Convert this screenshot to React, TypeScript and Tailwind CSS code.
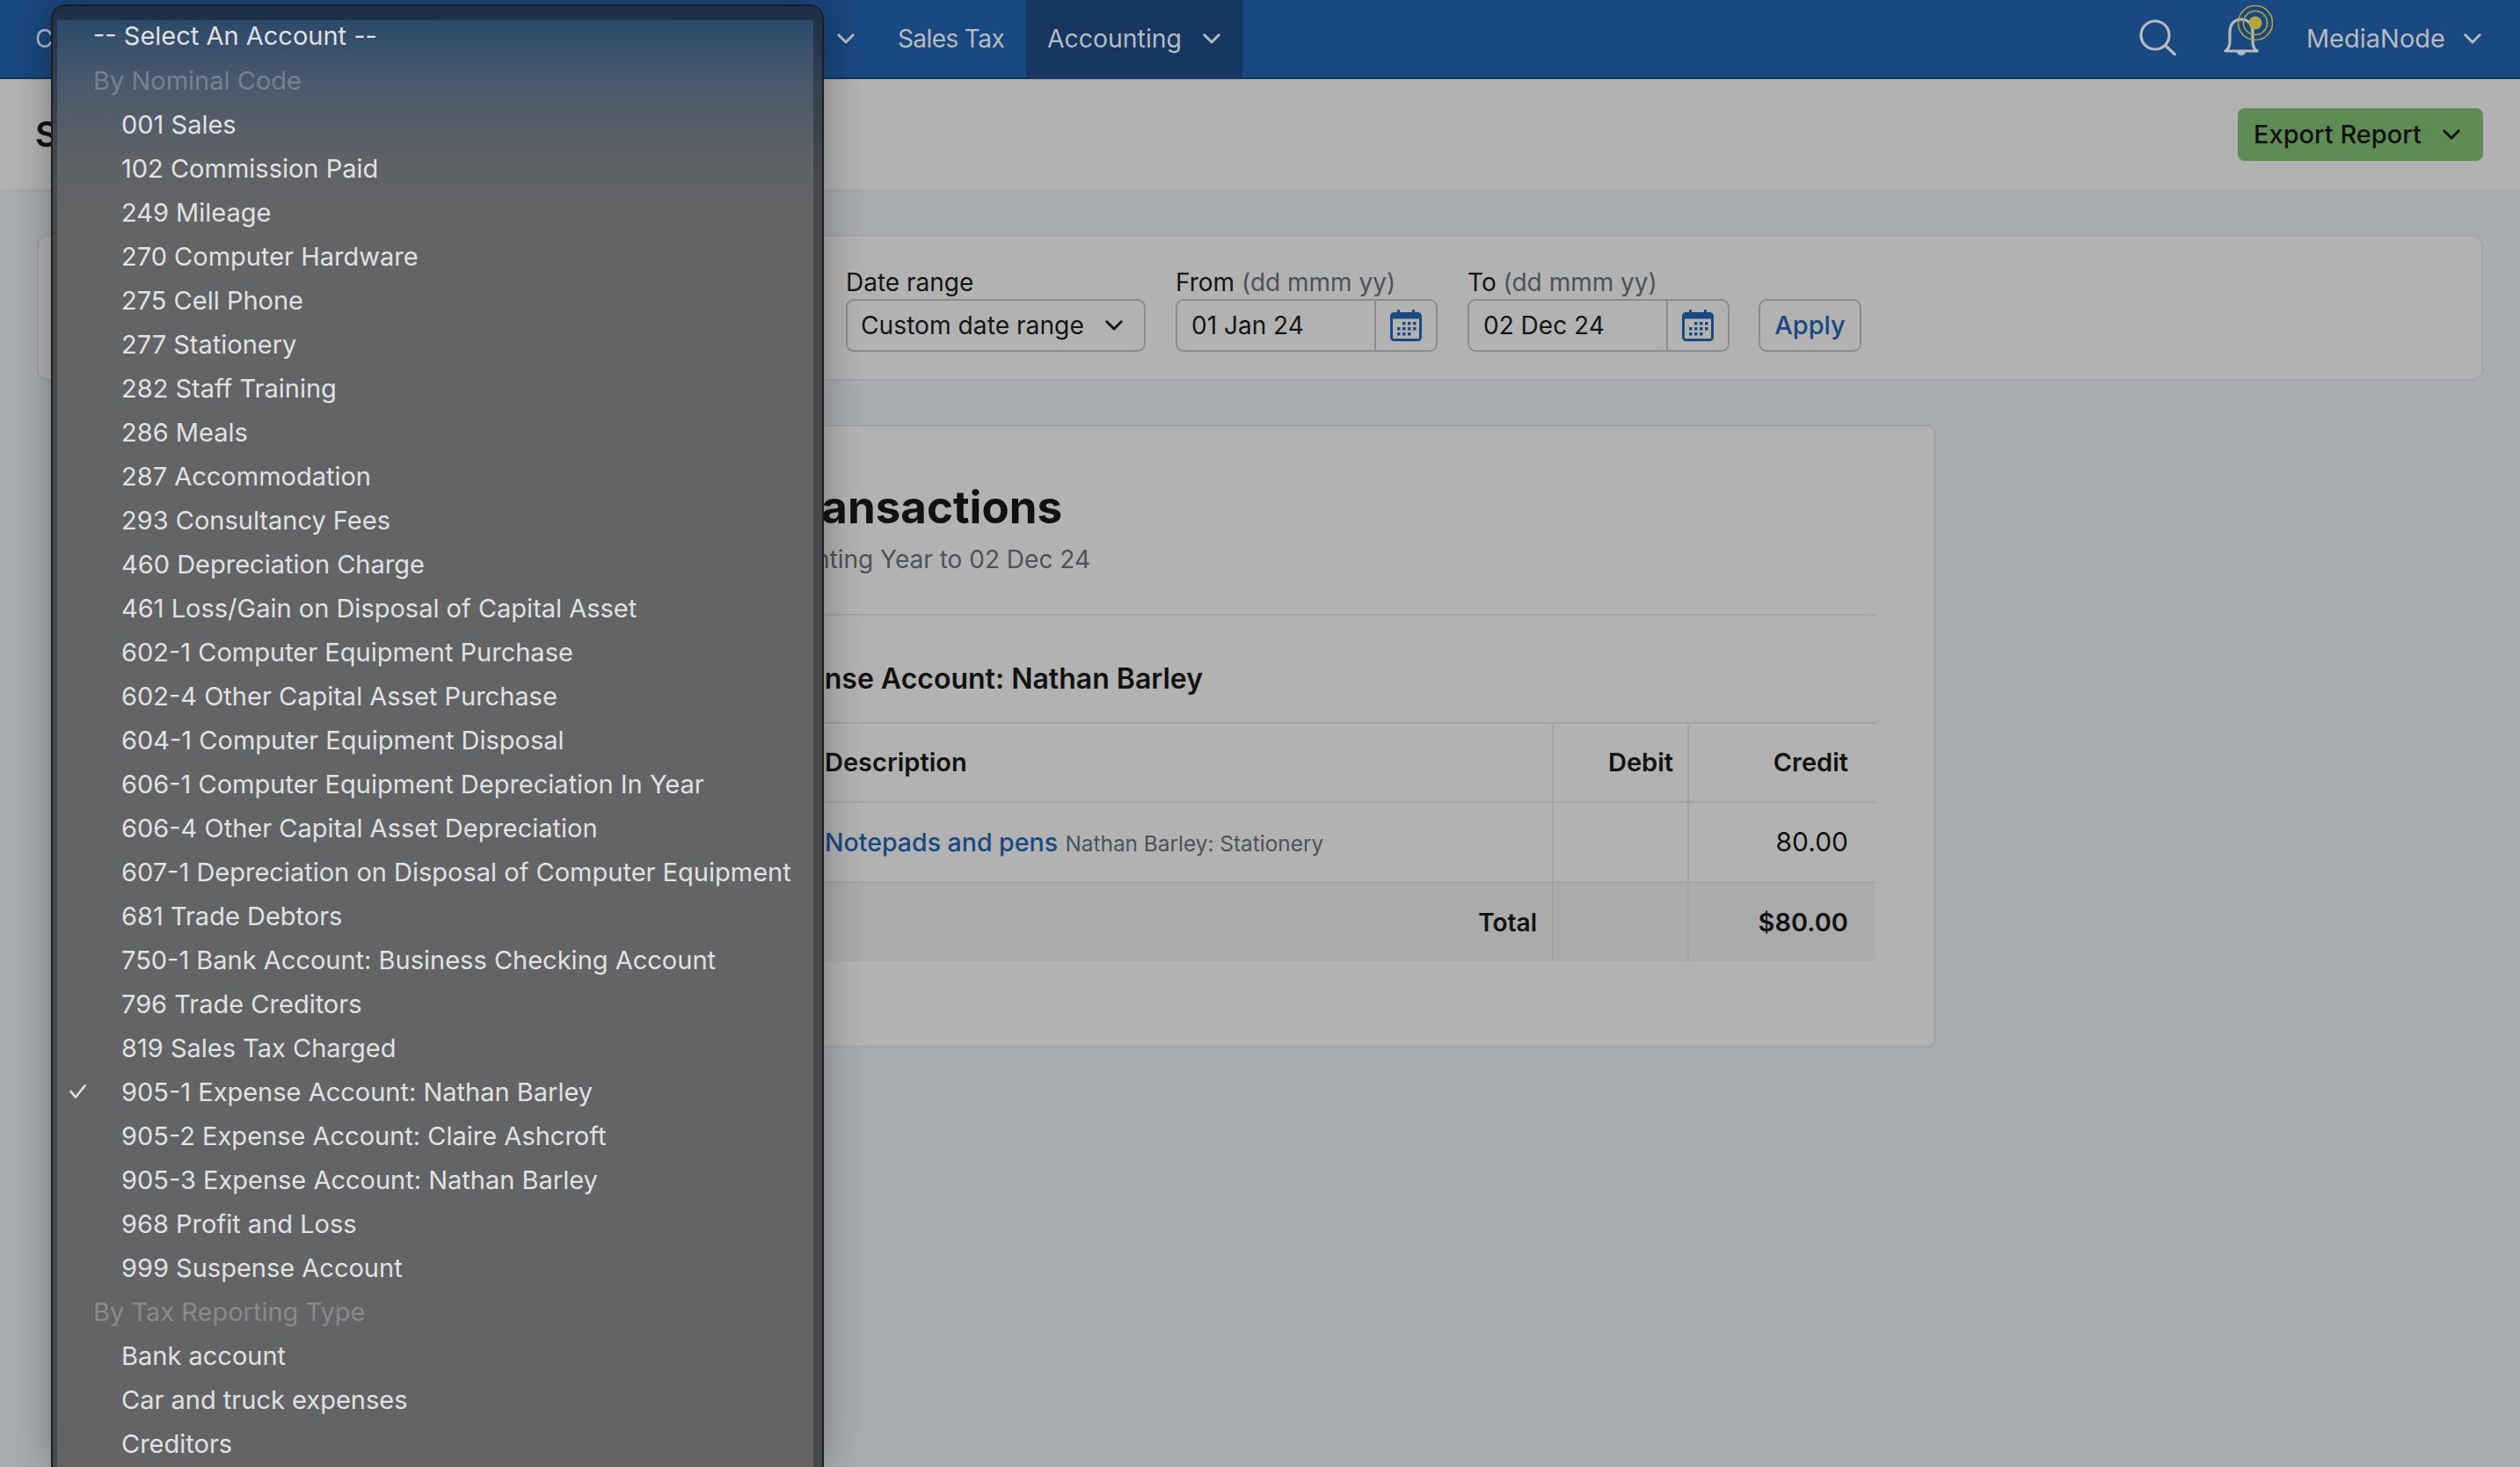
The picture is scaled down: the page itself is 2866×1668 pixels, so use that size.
import React from 'react';

const accounts = [
  '001 Sales',
  '102 Commission Paid',
  '249 Mileage',
  '270 Computer Hardware',
  '275 Cell Phone',
  '277 Stationery',
  '282 Staff Training',
  '286 Meals',
  '287 Accommodation',
  '293 Consultancy Fees',
  '460 Depreciation Charge',
  '461 Loss/Gain on Disposal of Capital Asset',
  '602-1 Computer Equipment Purchase',
  '602-4 Other Capital Asset Purchase',
  '604-1 Computer Equipment Disposal',
  '606-1 Computer Equipment Depreciation In Year',
  '606-4 Other Capital Asset Depreciation',
  '607-1 Depreciation on Disposal of Computer Equipment',
  '681 Trade Debtors',
  '750-1 Bank Account: Business Checking Account',
  '796 Trade Creditors',
  '819 Sales Tax Charged',
  '905-1 Expense Account: Nathan Barley',
  '905-2 Expense Account: Claire Ashcroft',
  '905-3 Expense Account: Nathan Barley',
  '968 Profit and Loss',
  '999 Suspense Account',
];

const taxTypes = ['Bank account', 'Car and truck expenses', 'Creditors'];

const Chevron = ({ className }: { className: string }) => (
  <svg viewBox="0 0 20 12" className={`w-[20px] h-[12px] shrink-0 ${className}`} fill="none" stroke="currentColor" strokeWidth="3" strokeLinecap="round" strokeLinejoin="round">
    <path d="M1.8 1.8 L10 10 L18.2 1.8" />
  </svg>
);

const CalendarIcon = () => (
  <svg viewBox="0 0 36 36" className="w-[36px] h-[36px]" fill="#1a4880">
    <rect x="1.5" y="4.5" width="33" height="30" rx="3" fill="none" stroke="#1a4880" strokeWidth="3" />
    <rect x="1.5" y="4.5" width="33" height="6" />
    <rect x="8" y="0" width="3" height="8" rx="1" />
    <rect x="25" y="0" width="3" height="8" rx="1" />
    <rect x="14" y="14" width="3.5" height="3.5" />
    <rect x="20" y="14" width="3.5" height="3.5" />
    <rect x="26" y="14" width="3.5" height="3.5" />
    <rect x="8" y="20" width="3.5" height="3.5" />
    <rect x="14" y="20" width="3.5" height="3.5" />
    <rect x="20" y="20" width="3.5" height="3.5" />
    <rect x="26" y="20" width="3.5" height="3.5" />
    <rect x="8" y="26" width="3.5" height="3.5" />
    <rect x="14" y="26" width="3.5" height="3.5" />
    <rect x="20" y="26" width="3.5" height="3.5" />
  </svg>
);

const DateField = ({ label, value }: { label: string; value: string }) => (
  <div className="w-[298px]">
    <div className="h-[36px] leading-[36px] text-[28px] text-[#141516] whitespace-nowrap">
      {label} <span className="text-[#4c535b]">(dd mmm yy)</span>
    </div>
    <div className="mt-[1px] flex h-[60px] rounded-[9px] border-2 border-[#8a8d90]">
      <div className="flex-1 flex items-center pl-[16px] text-[28px] text-[#141516]">{value}</div>
      <div className="w-[70px] border-l-2 border-[#8a8d90] flex items-center justify-center">
        <CalendarIcon />
      </div>
    </div>
  </div>
);

export default function App() {
  return (
    <div className="relative w-[2866px] h-[1668px] overflow-hidden bg-[#a8abb0] font-[Inter,sans-serif]">
      {/* Nav */}
      <div className="flex items-center h-[90px] bg-[#1a4880] border-b-2 border-[#14375f] text-[#b7bbc1] text-[28px]">
        <div className="w-[952px] pl-[40px]">C</div>
        <Chevron className="" />
        <div className="ml-[25px] w-[170px] pl-[24px] tracking-[-0.6px] whitespace-nowrap">Sales Tax</div>
        <div className="flex items-center w-[246px] h-full pl-[24px] bg-[#163762]">
          <span className="text-[28.4px]">Accounting</span>
          <Chevron className="ml-[24px]" />
        </div>
        <div className="ml-auto flex items-center pr-[44px]">
          <svg viewBox="0 0 42 41" className="w-[42px] h-[41px] -mt-[3px]" fill="none" stroke="#b7bbc1" strokeWidth="3.2" strokeLinecap="round">
            <circle cx="18" cy="18" r="16" />
            <path d="M30 30 L40.5 40" />
          </svg>
          <svg viewBox="0 0 56 57" className="ml-[54px] w-[56px] h-[57px] -mt-[19px]" fill="none">
            <path d="M2 52 C6 50 7 46 7 40 V30 C7 22 12 16 20 16 C28 16 33 22 33 30 V40 C33 46 34 50 38 52 Z" stroke="#b7bbc1" strokeWidth="3.2" strokeLinejoin="round" />
            <path d="M15 53 A5 4 0 0 0 25 53 Z" fill="#b7bbc1" />
            <circle cx="36" cy="20" r="19.5" stroke="#b5a63c" strokeWidth="1.6" />
            <circle cx="36" cy="20" r="13.5" stroke="#b5a63c" strokeWidth="1.6" />
            <circle cx="36" cy="20" r="7.5" fill="#b5a63c" />
          </svg>
          <span className="ml-[38px] text-[29px]">MediaNode</span>
          <Chevron className="ml-[21px]" />
        </div>
      </div>

      {/* Page header */}
      <div className="flex items-center justify-between h-[128px] bg-[#b2b2b2] border-b-2 border-[#a1a3a6] pl-[40px] pr-[42px]">
        <div className="text-[40px] font-semibold text-[#111]">S</div>
        <div className="flex items-center h-[60px] w-[279px] pl-[18px] rounded-[8px] bg-[#5f8c55] text-[#111] text-[29px] font-medium">
          <span className="whitespace-nowrap">Export Report</span>
          <Chevron className="ml-auto mr-[26px]" />
        </div>
      </div>

      <div className="pt-[49px] pl-[42px] pr-[42px]">
        {/* Filters */}
        <div className="flex items-start gap-[34px] h-[166px] rounded-[12px] border-2 border-[#a1a3a6] bg-[#b2b2b2] pt-[34px] pl-[918px]">
          <div className="w-[341px]">
            <div className="h-[36px] leading-[36px] text-[28px] text-[#141516]">Date range</div>
            <div className="mt-[1px] flex items-center justify-between h-[60px] rounded-[9px] border-2 border-[#8a8d90] pl-[15px] pr-[24px] text-[28.2px] text-[#141516]">
              <span className="whitespace-nowrap">Custom date range</span>
              <Chevron className="" />
            </div>
          </div>
          <DateField label="From" value="01 Jan 24" />
          <DateField label="To" value="02 Dec 24" />
          <div className="mt-[37px] -ml-[1px] flex items-center justify-center w-[117px] h-[60px] rounded-[9px] border-2 border-[#8a8d90] text-[29px] font-medium text-[#1a4880]">
            Apply
          </div>
        </div>

        {/* Report card, its left edge sits under the open menu */}
        <div className="mt-[50px] ml-[455px] w-[1704px] rounded-[8px] border-2 border-[#a1a3a6] bg-[#b2b2b2] pt-[57px] pb-[96px] pl-[62px] pr-[66px]">
          <div className="w-[647px] h-[70px] leading-[70px] text-right text-[51px] font-bold text-[#111] whitespace-nowrap">Transactions</div>
          <div className="w-[679px] mt-[4px] h-[40px] leading-[40px] text-right text-[28px] text-[#4c535b] whitespace-nowrap">Accounting Year to 02 Dec 24</div>
          <div className="mt-[42px] h-[2px] bg-[#a1a3a6]" />
          <div className="w-[807px] mt-[52px] h-[40px] leading-[40px] text-right text-[32px] font-semibold text-[#111] whitespace-nowrap">905-1 Expense Account: Nathan Barley</div>
          <table className="mt-[29px] w-full table-fixed border-collapse text-[30px] text-[#111]">
            <colgroup>
              <col className="w-[377px]" />
              <col />
              <col className="w-[154px]" />
              <col className="w-[213px]" />
            </colgroup>
            <tbody>
              <tr className="h-[90px] border-y-2 border-[#a1a3a6] font-semibold text-[29px]">
                <td />
                <td>Description</td>
                <td className="border-l-2 border-[#a1a3a6] text-right pr-[16px]">Debit</td>
                <td className="border-l-2 border-[#a1a3a6] text-right pr-[31px]">Credit</td>
              </tr>
              <tr className="h-[91px] border-b-2 border-[#a1a3a6]">
                <td />
                <td className="whitespace-nowrap">
                  <span className="text-[28.5px] font-medium text-[#1a4880]">Notepads and pens</span>{' '}
                  <span className="text-[24.4px] text-[#4c535b]">Nathan Barley: Stationery</span>
                </td>
                <td className="border-l-2 border-[#a1a3a6]" />
                <td className="border-l-2 border-[#a1a3a6] text-right pr-[31px]">80.00</td>
              </tr>
              <tr className="h-[90px] bg-[#ababab] font-semibold text-[29px]">
                <td colSpan={2} className="text-right pr-[17px] text-[28px]">Total</td>
                <td className="border-l-2 border-[#a1a3a6]" />
                <td className="border-l-2 border-[#a1a3a6] text-right pr-[31px]">$80.00</td>
              </tr>
            </tbody>
          </table>
        </div>
      </div>

      {/* Native select menu */}
      <div className="absolute left-[58px] top-[5px] w-[879px] h-[1663px] pt-[16px] pl-[5px] pr-[10px] rounded-t-[16px] border-x-2 border-t-2 border-[#1b1e22] bg-[linear-gradient(180deg,#1b2f48_0px,#33404f_90px,#48494b_200px)] shadow-[0_0_45px_rgba(0,0,0,0.32)] text-[29px] text-[#e0e1e2] overflow-hidden">
        <div className="h-full bg-[linear-gradient(180deg,#2c4a6b_0px,#4a596c_70px,#5f6266_160px,#636466_220px)] pl-[41px]">
          <div className="h-[44px] pb-[8px] flex items-center">-- Select An Account --</div>
          <div className="h-[50px] flex items-center text-white/25">By Nominal Code</div>
          {accounts.map((name, i) => (
            <div key={i} className="relative h-[50px] flex items-center pl-[32px] whitespace-nowrap">
              {i === 22 && (
                <svg viewBox="0 0 19 16" className="absolute left-[-27px] top-[16px] w-[19px] h-[16px]" fill="none" stroke="#e0e1e2" strokeWidth="2.6" strokeLinecap="round" strokeLinejoin="round">
                  <path d="M1.5 8 L7 14.5 L17.5 1.5" />
                </svg>
              )}
              {name}
            </div>
          ))}
          <div className="h-[50px] flex items-center text-white/25">By Tax Reporting Type</div>
          {taxTypes.map((name) => (
            <div key={name} className="h-[50px] flex items-center pl-[32px]">{name}</div>
          ))}
        </div>
      </div>
    </div>
  );
}
